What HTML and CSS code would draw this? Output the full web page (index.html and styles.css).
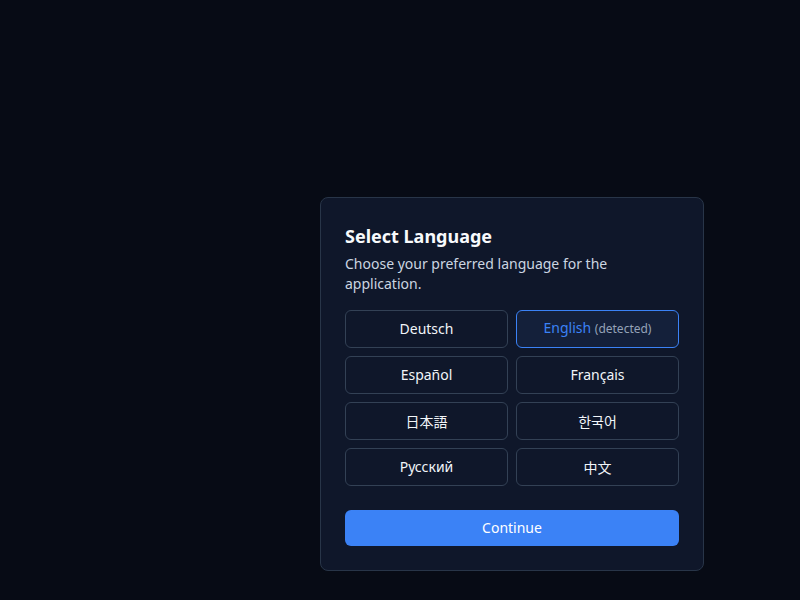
FILE: index.html
```html
<!DOCTYPE html>
<html lang="en">
<head>
<meta charset="utf-8">
<title>Select Language</title>
<link rel="stylesheet" href="styles.css">
</head>
<body>
<div class="viewport">
  <div class="stage">
    <div class="card">
      <h1 class="title">Select Language</h1>
      <p class="desc">Choose your preferred language for the application.</p>
      <div class="grid">
        <button class="lang">Deutsch</button>
        <button class="lang selected"><span>English <span class="detected">(detected)</span></span></button>
        <button class="lang">Español</button>
        <button class="lang">Français</button>
        <button class="lang" lang="ja">日本語</button>
        <button class="lang" lang="ko">한국어</button>
        <button class="lang">Русский</button>
        <button class="lang" lang="zh">中文</button>
      </div>
      <button class="continue">Continue</button>
    </div>
  </div>
</div>
</body>
</html>
```
FILE: styles.css
```css
html, body {
  margin: 0;
  padding: 0;
  background: #070b15;
}
body {
  font-family: "Noto Sans", "Noto Sans CJK SC", "Noto Sans CJK JP", "Noto Sans CJK KR", sans-serif;
  color: #f1f5f9;
}
.viewport {
  width: 100vw;
  height: 100vh;
  overflow: hidden;
}
.stage {
  width: 1024px;
  height: 768px;
  display: flex;
  align-items: center;
  justify-content: center;
}
.card {
  box-sizing: border-box;
  width: 384px;
  padding: 24px;
  background: #0f172a;
  border: 1px solid #283548;
  border-radius: 8px;
}
.title {
  margin: 0;
  font-size: 18px;
  line-height: 28px;
  font-weight: 700;
  color: #f8fafc;
}
.desc {
  margin: 4px 0 16px;
  font-size: 14px;
  line-height: 20px;
  color: #cbd5e1;
}
.grid {
  display: grid;
  grid-template-columns: 1fr 1fr;
  gap: 8px;
}
.lang {
  box-sizing: border-box;
  height: 38px;
  margin: 0;
  padding: 0 8px 1px;
  display: flex;
  align-items: center;
  justify-content: center;
  font-family: inherit;
  font-size: 14px;
  line-height: 20px;
  color: #f1f5f9;
  background: #0f172a;
  border: 1px solid #334155;
  border-radius: 6px;
  cursor: pointer;
}
.lang[lang="ja"] { font-family: "Noto Sans CJK JP", sans-serif; }
.lang[lang="ko"] { font-family: "Noto Sans CJK KR", sans-serif; }
.lang[lang="zh"] { font-family: "Noto Sans CJK SC", sans-serif; }
.lang.selected {
  background: #14203a;
  border-color: #3b82f6;
  color: #3b82f6;
}
.detected {
  font-size: 12px;
  color: #94a3b8;
}
.continue {
  display: flex;
  align-items: center;
  justify-content: center;
  box-sizing: border-box;
  width: 100%;
  height: 36px;
  margin: 24px 0 0;
  padding: 0 0 1px;
  font-family: inherit;
  font-size: 14px;
  line-height: 20px;
  color: #ffffff;
  background: #3b82f6;
  border: none;
  border-radius: 6px;
  cursor: pointer;
}
```
